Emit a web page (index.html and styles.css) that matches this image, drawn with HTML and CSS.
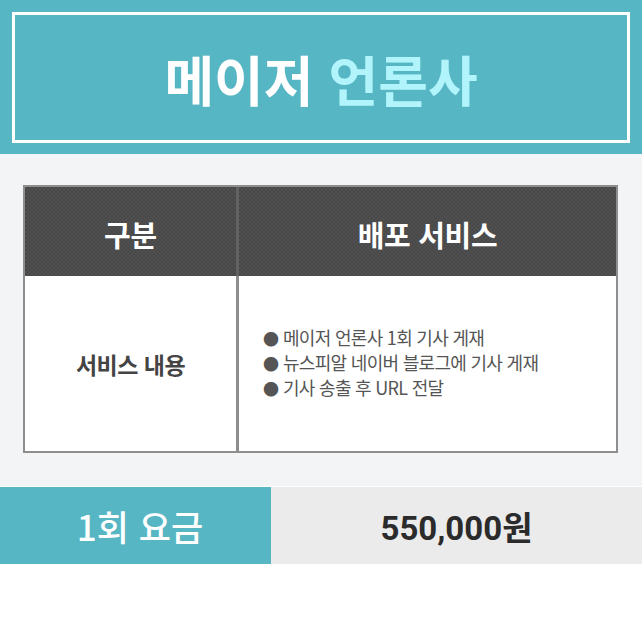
FILE: index.html
```html
<!DOCTYPE html>
<html lang="ko">
<head>
<meta charset="utf-8">
<title>메이저 언론사</title>
<link rel="stylesheet" href="styles.css">
</head>
<body>
<header class="hero">
  <div class="hero-box">
    <h1 class="hero-title">메이저 <span class="accent">언론사</span></h1>
  </div>
</header>
<section class="content">
  <div class="table">
    <div class="cell head first">구분</div>
    <div class="cell head">배포 서비스</div>
    <div class="cell body first label">서비스 내용</div>
    <div class="cell body list-cell">
      <ul class="list">
        <li><span class="dot">●</span>메이저 언론사 1회 기사 게재</li>
        <li><span class="dot">●</span>뉴스피알 네이버 블로그에 기사 게재</li>
        <li><span class="dot">●</span>기사 송출 후 URL 전달</li>
      </ul>
    </div>
  </div>
</section>
<section class="price">
  <div class="price-label">1회 요금</div>
  <div class="price-value">550,000원</div>
</section>
</body>
</html>
```

FILE: styles.css
```css
* { box-sizing: border-box; }
html, body { margin: 0; padding: 0; background: #ffffff; }
body {
  width: 642px;
  font-family: "Noto Sans CJK KR", "Noto Sans", sans-serif;
}
.hero {
  background: #57b6c3;
  padding: 12px 12px 11px;
}
.hero-box {
  border: 3px solid #ffffff;
  height: 131px;
  display: flex;
  align-items: center;
  justify-content: center;
}
.hero-title {
  margin: 0;
  font-size: 54px;
  font-weight: 700;
  color: #ffffff;
  line-height: 1;
  letter-spacing: 0;
  padding-top: 2px;
}
.accent { color: #b2f4fc; }

.content {
  background: #f3f4f6;
  padding: 31px 24px 33px 23px;
  border-bottom: 1px solid #ffffff;
}
.table {
  border: 2px solid #8e8e8e;
  display: grid;
  grid-template-columns: 214px 1fr;
  grid-template-rows: 89px 175px;
  background: #ffffff;
}
.cell {
  display: flex;
  align-items: center;
  justify-content: center;
}
.head {
  background-color: #4b4b4b;
  background-image: repeating-conic-gradient(#474747 0 25%, #515151 0 50%);
  background-size: 4px 4px;
  color: #ffffff;
  font-size: 29px;
  font-weight: 700;
  letter-spacing: -0.3px;
  padding-top: 4px;
}
.head.first { border-right: 3px solid #626262; }
.body.first { border-right: 3px solid #8e8e8e; }
.label {
  font-size: 23px;
  font-weight: 700;
  color: #444444;
  letter-spacing: -0.5px;
}
.list-cell { justify-content: flex-start; padding-left: 24px; padding-bottom: 2px; }
.list {
  list-style: none;
  margin: 0;
  padding: 0;
  font-size: 18px;
  line-height: 24px;
  color: #555555;
  letter-spacing: -0.7px;
}
.dot {
  display: inline-block;
  font-size: 16px;
  width: 20px;
  letter-spacing: 0;
  color: #555555;
}

.price {
  display: grid;
  grid-template-columns: 271px 1fr;
  height: 77px;
}
.price-label {
  background: #57b6c3;
  color: #ffffff;
  font-size: 35px;
  font-weight: 500;
  display: flex;
  align-items: center;
  justify-content: center;
  padding-left: 9px;
}
.price-value {
  background: #ebebeb;
  color: #2b2b2b;
  font-family: "Roboto", "Noto Sans CJK KR", sans-serif;
  font-weight: 700;
  font-size: 33px;
  display: flex;
  align-items: center;
  justify-content: center;
}
```
